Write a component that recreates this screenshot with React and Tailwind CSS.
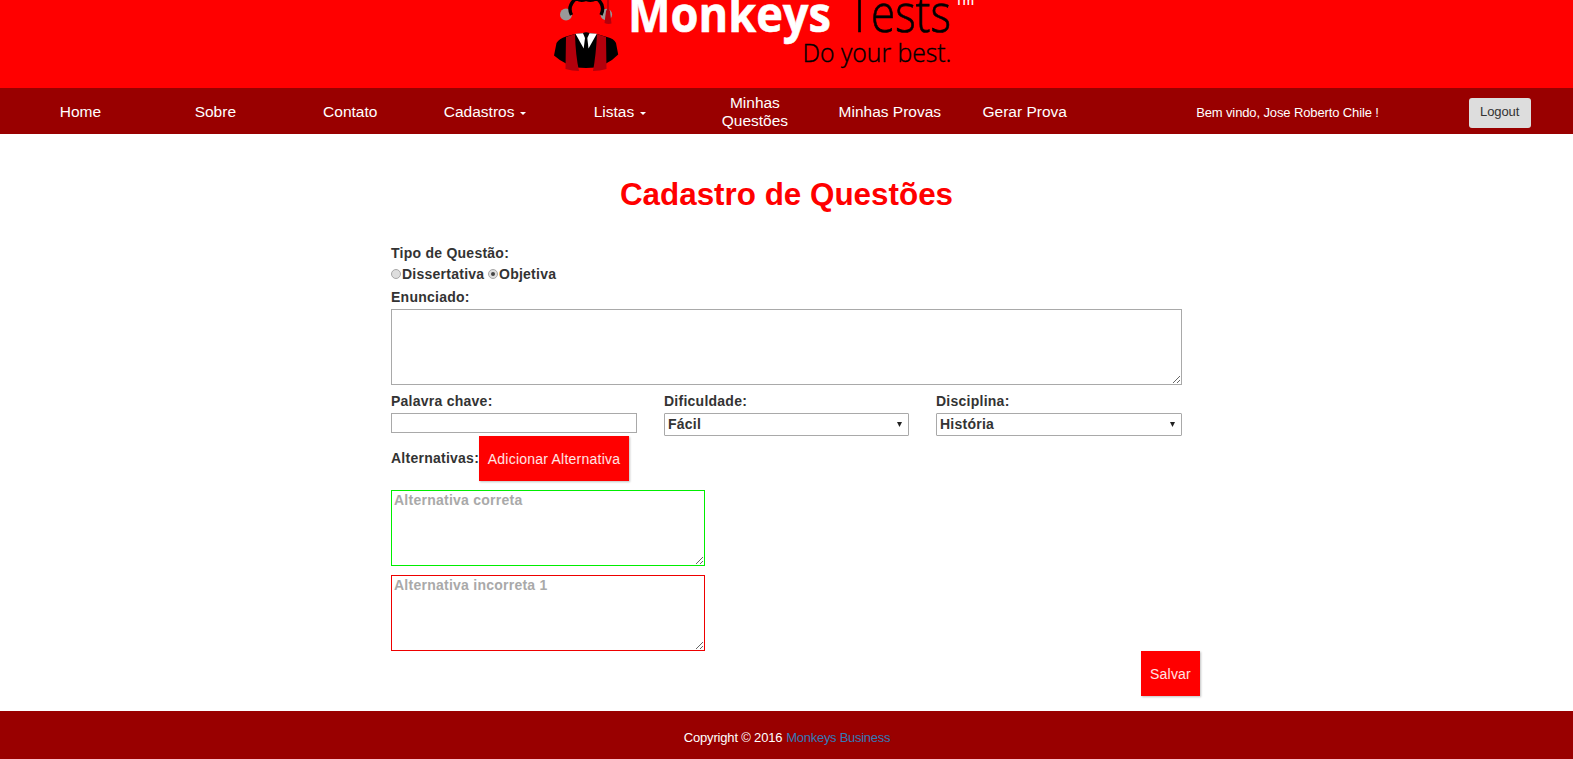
import React from "react";

const navItems = [
  { label: "Home" },
  { label: "Sobre" },
  { label: "Contato" },
  { label: "Cadastros", caret: true },
  { label: "Listas", caret: true },
  { label: "Minhas Questões" },
  { label: "Minhas Provas" },
  { label: "Gerar Prova" },
];

function Logo() {
  return (
    <svg className="block h-[88px] w-[440px]" viewBox="550 0 440 88">
      <circle cx="566" cy="14.5" r="6" fill="#999" />
      <circle cx="606.3" cy="14.5" r="5.8" fill="#999" />
      <path d="M571.5 15C568.500 9 570.5 3 576 -1.5M601 15C604 9 602.500 3 597 -1.500M577 -1.5Q580 1.500 586 -.5Q592 1.500 596 -1.5" fill="none" stroke="#000" strokeWidth="3.4" />
      <path d="M607.200 0H608.800V9L610 11L611.500 23.500Q608 24.500 604.500 23L606 11L607.200 9Z" fill="#b3000c" />
      <path d="M575 34L583 33Q586 31.500 589.500 33L597 34L607 37Q614 38.500 616 43L618.200 54.500Q613 60 606 63.500V66Q586 70 566 66V63.500Q559 60 554 55.500L556.500 43Q559 38.500 566 36.500Z" fill="#000" />
      <path d="M575.500 33.800L583.700 48.500L585 38L583 33.300Z" fill="#fff" />
      <path d="M596.800 33.800L588.500 48.500L587.300 38L589.500 33.300Z" fill="#fff" />
      <path d="M566 37L575 34Q575.500 55 579 71Q572 71 565.500 69Z" fill="#b3000c" />
      <path d="M597 34L606 37L606.500 69Q600 71 593 71Q596 55 597 34Z" fill="#b3000c" />
      <text x="628" y="32" fontSize="50" fontWeight="700" fill="#fff" stroke="#fff" strokeWidth="0.6" textLength="203" lengthAdjust="spacingAndGlyphs" className="font-['Open_Sans',sans-serif]">Monkeys</text>
      <text x="848" y="32" fontSize="53" fontWeight="300" fill="#000" stroke="#000" strokeWidth="0.7" textLength="103" lengthAdjust="spacingAndGlyphs" className="font-['Open_Sans',sans-serif]">Tests</text>
      <text x="802.500" y="61.700" fontSize="25" fontWeight="300" fill="#000" stroke="#000" strokeWidth="0.4" textLength="149" lengthAdjust="spacingAndGlyphs" className="font-['Open_Sans',sans-serif]">Do your best.</text>
      <text x="955.500" y="4.900" fontSize="12" fontWeight="600" fill="#fff" textLength="18.500" lengthAdjust="spacingAndGlyphs" className="font-['Open_Sans',sans-serif]">Tm</text>
    </svg>
  );
}

function Radio({ checked }) {
  return (
    <span className="flex size-[10px] shrink-0 items-center justify-center rounded-full border border-[#a8a8a8] bg-[#dedede]">
      {checked && <span className="size-1 rounded-full bg-[#444]" />}
    </span>
  );
}

function Select({ value }) {
  return (
    <div className="flex h-[23px] items-center justify-between rounded-[1px] border border-[#a9a9a9] pl-[3px] pr-[6px]">
      <span className="pb-px leading-5">{value}</span>
      <svg className="h-[5px] w-[5px]" viewBox="0 0 5 5">
        <path d="M0 0H5L2.500 5Z" fill="#222" />
      </svg>
    </div>
  );
}

export default function App() {
  return (
    <div className="flex h-[759px] w-[1573px] flex-col overflow-hidden bg-white font-['Liberation_Sans',Arial,sans-serif] text-sm text-[#333]">
      <header className="h-[88px] bg-[#f00] pl-[550px]">
        <Logo />
      </header>

      <nav className="flex h-[46px] items-center bg-[#900] pl-[13px] text-white">
        {navItems.map((item) => (
          <a key={item.label} className="flex w-[134.900px] items-center justify-center px-[15px] pt-0.5 text-center text-[15.500px] leading-[18px]">
            {item.label}
            {item.caret && (
              <svg className="ml-[6px] mt-[3px] h-[3px] w-[6px]" viewBox="0 0 6 3">
                <path d="M0 0H6L3 3Z" fill="#fff" />
              </svg>
            )}
          </a>
        ))}
        <span className="ml-[104px] w-[273px] whitespace-nowrap pt-1 text-[13px] leading-[18px] tracking-[-0.120px]">Bem vindo, Jose Roberto Chile !</span>
        <button className="mt-[4px] h-[30px] w-[62px] rounded-[3px] bg-[#ddd] pb-[3px] pr-px text-[13px] leading-[18px] tracking-[-0.100px] text-[#333]">Logout</button>
      </nav>

      <main className="h-[577px] pt-[41px]">
        <h1 className="text-center text-[31.400px] font-bold leading-10 text-[#f00]">Cadastro de Questões</h1>

        <form className="ml-[391px] mt-7 w-[809px] font-bold tracking-[0.250px]">
          <div className="w-[791px]">
            <div className="h-[21px] leading-5">Tipo de Questão:</div>
            <div className="flex h-[23px] items-start leading-5">
              <label className="flex w-[97px] items-center gap-px"><Radio />Dissertativa</label>
              <label className="flex items-center gap-px"><Radio checked />Objetiva</label>
            </div>
            <label className="block h-[22px] leading-5">Enunciado:</label>
            <textarea className="block h-[76px] w-full resize border border-[#a9a9a9] p-0.5" />

            <div className="mt-[6px] grid grid-cols-[246px_245px_246px] justify-between">
              <div>
                <label className="block h-[22px] leading-5">Palavra chave:</label>
                <input className="block h-5 w-full border border-[#a9a9a9]" />
              </div>
              <div>
                <label className="block h-[22px] leading-5">Dificuldade:</label>
                <Select value="Fácil" />
              </div>
              <div>
                <label className="block h-[22px] leading-5">Disciplina:</label>
                <Select value="História" />
              </div>
            </div>

            <div className="flex h-[45px] items-center">
              <span className="w-[88px] whitespace-nowrap pb-0.5">Alternativas:</span>
              <button type="button" className="h-[45px] w-[150px] bg-[#f00] pt-px font-normal tracking-[0.230px] text-white/90 shadow-[1px_1px_2px_rgba(0,0,0,0.250)]">Adicionar Alternativa</button>
            </div>

            <textarea placeholder="Alternativa correta" className="mt-[9px] block h-[76px] w-[314px] resize border border-[#0e0] px-0.5 py-px leading-4 placeholder:text-[#a9a9a9]" />
            <textarea placeholder="Alternativa incorreta 1" className="mt-[9px] block h-[76px] w-[314px] resize border border-[#e00] px-0.5 py-px leading-4 placeholder:text-[#a9a9a9]" />
          </div>
          <div className="flex justify-end">
            <button type="button" className="h-[45px] w-[59px] bg-[#f00] pt-px font-normal tracking-[0.230px] text-white/90 shadow-[1px_1px_2px_rgba(0,0,0,0.250)]">Salvar</button>
          </div>
        </form>
      </main>

      <footer className="flex h-12 items-center justify-center gap-1 bg-[#900] pl-px pt-[6px] text-[13px] leading-5">
        <span className="tracking-[-0.180px] text-white">Copyright © 2016</span>
        <a className="tracking-[-0.280px] text-[#337ab7]">Monkeys Business</a>
      </footer>
    </div>
  );
}
